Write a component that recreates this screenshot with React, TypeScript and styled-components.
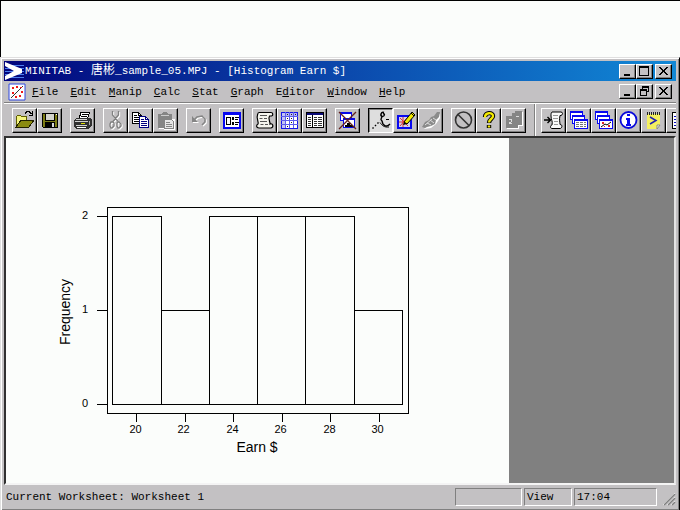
import React from "react";
import styled, { createGlobalStyle, css } from "styled-components";

const FACE = "#c3c1c3";
const LIGHT = "#fbfdfb";
const SHADOW = "#808080";

const GlobalStyle = createGlobalStyle`
  * { box-sizing: border-box; }
  body {
    margin: 0;
    background: ${LIGHT};
    font: 11px/16px "Liberation Mono", "Noto Sans CJK SC", monospace;
    color: #000;
  }
`;

const Page = styled.div`
  min-height: 100vh;
  display: flex;
  flex-direction: column;
`;

const TopStrip = styled.div`
  flex: 0 0 57px;
  background: ${LIGHT};
  border-top: 1px solid #000;
  border-left: 1px solid #000;
`;

const AppWindow = styled.main`
  flex: 1;
  min-width: 0;
  display: flex;
  flex-direction: column;
  padding: 3px;
  background: ${FACE};
  border: 1px solid;
  border-color: #dfdfdf #000 #000 #dfdfdf;
  box-shadow: inset 1px 1px 0 #fff, inset -1px -1px 0 ${SHADOW};
`;

const TitleBar = styled.header`
  display: flex;
  align-items: center;
  height: 20px;
  padding-right: 4px;
  background: linear-gradient(90deg, #02057c, #0b48ac 50%, #1188d6);
`;

const Title = styled.h1`
  flex: 1;
  margin: 0;
  padding-left: 1px;
  font: inherit;
  color: #fff;
  white-space: nowrap;
  overflow: hidden;
`;

const Hanzi = styled.span`
  font-size: 12px;
  line-height: 16px;
`;

const MenuBar = styled.nav`
  display: flex;
  align-items: center;
  height: 21px;
  padding: 0 4px;
`;

const MenuList = styled.div`
  flex: 1;
  display: flex;
  gap: 12px;
  padding-left: 6px;
  min-width: 0;
  overflow: hidden;
`;

const MenuItem = styled.button`
  border: 0;
  padding: 0;
  background: none;
  color: #000;
  font: inherit;
`;

const Controls = styled.div`
  display: flex;
  flex: none;
`;

const raised = css`
  border: 1px solid;
  border-color: #fff #000 #000 #fff;
  box-shadow: inset -1px -1px 0 ${SHADOW};
`;

const ControlButton = styled.button<{ $apart?: boolean }>`
  display: block;
  width: 17px;
  height: 15px;
  padding: 0;
  margin-left: ${(p) => (p.$apart ? "2px" : "0")};
  background: ${FACE};
  ${raised}
`;

const ToolRow = styled.div`
  display: flex;
  height: 34px;
  border-top: 1px solid ${SHADOW};
  box-shadow: inset 0 1px 0 #fff;
  overflow: hidden;
`;

const ToolBar = styled.div<{ $second?: boolean }>`
  display: flex;
  flex: none;
  gap: 8px;
  padding: 4px 8px;
  margin-top: 1px;
  ${(p) =>
    p.$second &&
    css`
      padding-left: 6px;
      border-left: 1px solid ${SHADOW};
      box-shadow: inset 1px 0 0 #fff;
    `}
`;

const ToolGroup = styled.div`
  display: flex;
`;

const ToolButton = styled.button<{ $pressed?: boolean }>`
  display: block;
  width: 25px;
  height: 25px;
  padding: 1px;
  background: ${FACE};
  ${raised}
  ${(p) =>
    p.$pressed &&
    css`
      background: #dedede;
      border-color: #000 #fff #fff #000;
      box-shadow: inset 1px 1px 0 ${SHADOW};
    `}
`;

const Icon = styled.svg`
  display: block;
  width: 21px;
  height: 21px;
`;

const Workspace = styled.section`
  flex: 1;
  display: grid;
  grid-template-columns: 61fr 20fr;
  background: ${SHADOW};
  border: 2px solid;
  border-color: #303030 #e4e4e4 #f4f4f4 #303030;
`;

const GraphSheet = styled.div`
  background: ${LIGHT};
  min-width: 0;
`;

const Chart = styled.svg`
  display: block;
  width: 503px;
  max-width: 100%;
  height: auto;
  font-family: "Liberation Sans", sans-serif;
`;

const StatusBar = styled.footer`
  display: flex;
  align-items: center;
  gap: 2px;
  height: 21px;
  margin-top: 1px;
`;

const StatusText = styled.div`
  flex: 1;
  padding-left: 2px;
  white-space: nowrap;
`;

const Pane = styled.div<{ $width: number }>`
  width: ${(p) => p.$width}px;
  height: 18px;
  padding-left: 2px;
  border: 1px solid;
  border-color: ${SHADOW} #fff #fff ${SHADOW};
`;

const Grip = styled.svg`
  width: 17px;
  height: 18px;
`;

type Tool = {
  label: string;
  pressed?: boolean;
  disabled?: boolean;
  art: React.ReactNode;
};

const crisp = { shapeRendering: "crispEdges" as const };

const OpenArt = (
  <g {...crisp}>
    <path d="M2 17V6h1V5h4v1h6v4h-6z" fill="#f4f480" />
    <path d="M2.500 16.500V6.500l1-1h3l1 1h5v3" fill="none" stroke="#606000" />
    <path d="M2 17l5-7h13l-5 7z" fill="#8a8a10" stroke="#202000" />
    <path d="M11.500 4V2.500h1v-1h3v1h1v1h1M18.500 1v4h-4" fill="none" stroke="#000" />
  </g>
);
const SaveArt = (
  <g {...crisp}>
    <path d="M3.500 3.500h15v14h-14l-1-1z" fill="#7c7c14" stroke="#000" />
    <path d="M6 4h10v6H6z" fill="#d4d4cc" />
    <path d="M6.500 4v6.500h9V4" fill="none" stroke="#000" />
    <path d="M6 12h10v6H6z" fill="#000" />
    <path d="M13 13h2v4h-2z" fill="#d8d8d8" />
    <path d="M17 4h1v1h-1z" fill="#fff" />
  </g>
);
const PrintArt = (
  <g {...crisp}>
    <path d="M7 9l2-7h9l-3 7z" fill="#fff" stroke="#000" />
    <path d="M9.500 4.500h6M9 6.500h6" stroke="#000" />
    <path d="M2 10l3-2h13l2 2v5l-3 4H4l-2-2z" fill="#303030" />
    <path d="M4 9.500h11M3 11.500h13M4 15.500h11" stroke="#d0d0d0" />
    <path d="M5 17.500h9" stroke="#fff" />
    <path d="M9 13h4v1H9z" fill="#dede00" />
    <path d="M17 11l1-1v4l-1 1z" fill="#aaa" />
  </g>
);
const CutShape = (
  <path
    d="M7.500 1v4l6 7M13.500 1v4l-6 7M6 12h2l1 1v3l-2 2H6l-1-2v-2zM14 12h-1l-1 1v3l1 2h1l2-2v-2z"
    fill="none"
    strokeWidth="1.300"
  />
);
const CutArt = (
  <g>
    <g stroke="#fff" transform="translate(1 1)">{CutShape}</g>
    <g stroke="#808080">{CutShape}</g>
  </g>
);
const CopyArt = (
  <g {...crisp}>
    <path d="M2.500 2.500h6l3 3v8h-9z" fill="#fff" stroke="#000" />
    <path d="M8.500 2.500v3h3M4 5.500h3M4 7.500h5M4 9.500h5M4 11.500h5" fill="none" stroke="#000" />
    <path d="M9.500 6.500h6l3 3v8h-9z" fill="#fff" stroke="#000080" />
    <path d="M15.500 6.500v3h3M11 9.500h3M11 11.500h6M11 13.500h6M11 15.500h6" fill="none" stroke="#000080" />
  </g>
);
const PasteArt = (
  <g {...crisp}>
    <path d="M4 5h13v4h3v11H9v-1H4z" fill="#fff" />
    <path d="M3 4h4l1-2h4l1 2h4v14H3z" fill="#858585" />
    <path d="M6 5.500h8" stroke="#ccc" />
    <path d="M9.500 9.500h7l2 2v7h-9z" fill="#e6e6e6" stroke="#858585" />
    <path d="M11 12.500h4M11 14.500h6M11 16.500h6" stroke="#858585" />
  </g>
);
const UndoShape = (
  <g>
    <path d="M5 11l4-4 5-1 3 3v3l-3 3" fill="none" strokeWidth="1.600" />
    <path d="M4 6v6h6z" stroke="none" />
  </g>
);
const UndoArt = (
  <g>
    <g stroke="#fff" fill="#fff" transform="translate(1 1)">{UndoShape}</g>
    <g stroke="#858585" fill="#858585">{UndoShape}</g>
  </g>
);
const DialogArt = (
  <g {...crisp}>
    <path d="M3 3h16v15H3z" fill="#fff" stroke="#0808f0" strokeWidth="2" />
    <path d="M2 2h18v3H2z" fill="#0808f0" />
    <path d="M5.500 7.500h4v7h-4z" fill="#fff" stroke="#000" />
    <path d="M11.500 7.500h1v2h-1zM11.500 12.500h1v2h-1z" fill="none" stroke="#000" />
    <path d="M14 7.500h4M14 9.500h3M14 12.500h4M14 14.500h3" stroke="#000" />
  </g>
);
const ScrollArt = (
  <g>
    <path
      d="M5 2.500h12c2 0 2.500 3 .5 3.500h-2c-2 3 1 6 .5 8 3-1 4 3 1 4H5c-3 0-3-3-1-4 1-2-2-6-.5-9 .2-1.500.5-2.500 1.500-2.500z"
      fill="#f4f4ee"
      stroke="#000"
      strokeWidth="1.200"
    />
    <path d="M6 5.500h7M5.500 8.500h3M10 8.500h3M6 11.500h7M6.500 14.500h3M11 14.500h3" stroke="#555" />
  </g>
);
const WorksheetArt = (
  <g {...crisp}>
    <path d="M2.500 2.500h16v16h-16z" fill="#fff" stroke="#1414e8" />
    <path d="M3 3h15v3H3z" fill="#b4b4f4" />
    <path d="M3 3h3v15H3z" fill="#c4c4f4" />
    <path d="M6.500 2v16M10.500 2v16M14.500 2v16M2 6.500h17M2 10.500h17M2 14.500h17" stroke="#5c5cec" />
    <path d="M8 4.500h1M12 4.500h1M16 4.500h1M8 8.500h1M12 8.500h1M12 12.500h1M8 16.500h1" stroke="#222" />
  </g>
);
const ManagerArt = (
  <g {...crisp}>
    <path d="M2.500 2.500h17v15h-17z" fill="#fff" stroke="#000" />
    <path d="M3 3h16v2H3z" fill="#0c0c78" />
    <path d="M8.500 5v12" stroke="#000" />
    <path d="M4 7.500h3M4 9.500h3M4 11.500h3M4 13.500h3M4 15.500h3M10 7.500h3M14 7.500h4M10 9.500h3M14 9.500h4M10 11.500h3M14 11.500h4M10 13.500h3M14 13.500h4M10 15.500h3M14 15.500h4" stroke="#333" />
  </g>
);
const CloseGraphsArt = (
  <g>
    <g {...crisp} fill="#fff" stroke="#0808e8">
      <path d="M3.500 2.500h11v8h-11z" />
      <path d="M3 3h12" strokeWidth="2" />
      <path d="M6.500 8.500h11v9h-11z" />
      <path d="M6 9h12" strokeWidth="2" />
    </g>
    <path d="M8 17v-2h2v-2h3v2h3v2z" fill="#000" {...crisp} />
    <path d="M2 2l17 17M19 2L2 19" stroke="#64201c" strokeWidth="1.300" />
  </g>
);
const BrushArt = (
  <g fill="none" stroke="#000">
    <path
      d="M14 2.500c-3-1-4 3-2 4 3 0 3-3 1-3M12 7c-1 2-2 2 0 4 1 2 0 3 2 4 2 2 4 1 6-1"
      strokeWidth="1.500"
    />
    <path d="M10 12.500c2 3 4 5 9 4.500" />
    <path d="M2.500 18.500L10 11" strokeDasharray="1.500 2" strokeWidth="1.400" />
    <path d="M16 9.500h3" />
  </g>
);
const EditGraphArt = (
  <g>
    <path d="M3 6h13v12H3z" fill="#d0d0ee" stroke="#0808f0" strokeWidth="2" />
    <path d="M5 8l8 8M12 8l-7 8M4 12h10M8 7v10" stroke="#e03030" />
    <path d="M9 12l8-10 3 3-8 9z" fill="#f0e800" stroke="#000" />
    <path d="M8 15l1-3 3 2z" fill="#000" />
    <path d="M16 3l3 3" stroke="#000" />
  </g>
);
const PaintArt = (
  <g>
    <path d="M4 19l8-8 6-7h2v4l-4 6-5 4z" fill="#fff" />
    <path d="M2 17l3-5 4-2 2-3 3-1 3-4h3l-1 5-3 3-1 4-4 2-4 1-2 1z" fill="#8b8b8b" />
    <path d="M5 15l7-6M7 13l4 2M10 10l4 3M13 8l3 2" stroke="#ddd" />
  </g>
);
const CancelArt = (
  <g fill="none" stroke="#333">
    <circle cx="10.500" cy="10" r="8" strokeWidth="1.600" />
    <path d="M5 4.500l11 11" strokeWidth="1.600" />
  </g>
);
const HelpArt = (
  <g fill="none">
    <path d="M7 7c0-5 8-5 8-1 0 3-4 3-4 7M11 15v3" stroke="#000" strokeWidth="4.400" />
    <path d="M7 7.500c0-5.500 8-5.500 8-1.500 0 3-4 3-4 6.500M11 15.500v2" stroke="#f4ea00" strokeWidth="2.400" />
  </g>
);
const SessionOffArt = (
  <g {...crisp}>
    <path d="M4 7h6V4h8V2h2v14h-4v3H4z" fill="#fff" />
    <path d="M3 6h6V3h3V1h7v14h-4v3H3z" fill="#858585" />
    <path d="M6 9h3v1H6zM8 10h1v2H8zM6 12h2v1H6zM6 13h3v1H6zM13 6h3v1h-3z" fill="#ddd" />
  </g>
);
const InsertScrollArt = (
  <g>
    <path d="M1 10h6M4.500 7l3 3-3 3" stroke="#000" fill="none" strokeWidth="1.400" />
    <path d="M9 2h9c2 0 2 3 0 3.500h-1c-1 4 0 7 0 9 3 0 2 4 0 4H9c-2 0-2-3 0-3.500 1-4-1-5-1-9 0-2 0-3 1-4z" fill="#fafafa" stroke="#000" />
    <path d="M10 5.500h5M10 8.500h5M11 11.500h4M11 14.500h4" stroke="#999" />
  </g>
);
const stacked = (
  <g {...crisp} fill="#fff" stroke="#0808f0">
    <path d="M2.500 1.500h12v8h-12z" />
    <path d="M2 2h13" strokeWidth="2" />
    <path d="M4.500 5.500h12v8h-12z" />
    <path d="M4 6h13" strokeWidth="2" />
    <path d="M6.500 9.500h13v9h-13z" />
    <path d="M6 10h14" strokeWidth="2" />
  </g>
);
const SheetsArt = (
  <g>
    {stacked}
    <path d="M8 12.500h3M12 12.500h3M16 12.500h2M8 14.500h3M12 14.500h3M16 14.500h2M8 16.500h3M12 16.500h3M16 16.500h2" stroke="#777" {...crisp} />
  </g>
);
const GraphsArt = (
  <g>
    {stacked}
    <path d="M8 17l4-3 2 1 4-3" fill="none" stroke="#000" />
    <path d="M9 12h2v2H9zM15 15h2v2h-2zM11 16h1v1h-1z" fill="#e02020" />
  </g>
);
const InfoArt = (
  <g>
    <circle cx="10.500" cy="10" r="8" fill="#fff" stroke="#0808d8" strokeWidth="1.800" />
    <path d="M9 4h3v2H9zM8 8h4v6h1v2H8v-2h1v-4H8z" fill="#0808f0" {...crisp} />
  </g>
);
const NoteArt = (
  <g>
    <path d="M4 4h13v11l-3 4H4z" fill="#f4f060" />
    <path d="M17 15l-3 4v-4z" fill="#fff" stroke="#888" />
    <path d="M4 3.500h13" stroke="#222" strokeDasharray="1 1" strokeWidth="3" />
    <path d="M7 7l6 3.500L7 14" fill="none" stroke="#2020b0" strokeWidth="1.500" />
  </g>
);
const ReportArt = (
  <g {...crisp}>
    <path d="M4.500 2.500h12v16h-12z" fill="#fff" stroke="#000" />
    <path d="M6 6.500h9M6 9.500h9M6 12.500h9M6 15.500h9" stroke="#0808c0" />
  </g>
);

const mainTools: Tool[][] = [
  [
    { label: "Open", art: OpenArt },
    { label: "Save", art: SaveArt },
  ],
  [{ label: "Print", art: PrintArt }],
  [
    { label: "Cut", art: CutArt, disabled: true },
    { label: "Copy", art: CopyArt },
    { label: "Paste", art: PasteArt, disabled: true },
  ],
  [{ label: "Undo", art: UndoArt, disabled: true }],
  [{ label: "Last dialog", art: DialogArt }],
  [
    { label: "Session window", art: ScrollArt },
    { label: "Data window", art: WorksheetArt },
    { label: "Project manager", art: ManagerArt },
  ],
  [{ label: "Close graphs", art: CloseGraphsArt }],
  [
    { label: "View mode", art: BrushArt, pressed: true },
    { label: "Edit mode", art: EditGraphArt },
    { label: "Brush mode", art: PaintArt, disabled: true },
  ],
  [
    { label: "Cancel", art: CancelArt },
    { label: "Help", art: HelpArt },
    { label: "StatGuide", art: SessionOffArt, disabled: true },
  ],
];

const managerTools: Tool[] = [
  { label: "Show session", art: InsertScrollArt },
  { label: "Show worksheets", art: SheetsArt },
  { label: "Show graphs", art: GraphsArt },
  { label: "Show info", art: InfoArt },
  { label: "Show history", art: NoteArt },
  { label: "Show report", art: ReportArt },
];

const menus: [string, string, string][] = [
  ["", "F", "ile"],
  ["", "E", "dit"],
  ["", "M", "anip"],
  ["", "C", "alc"],
  ["", "S", "tat"],
  ["", "G", "raph"],
  ["E", "d", "itor"],
  ["", "W", "indow"],
  ["", "H", "elp"],
];

function Tools({ items }: { items: Tool[] }) {
  return (
    <ToolGroup>
      {items.map((t) => (
        <ToolButton
          key={t.label}
          type="button"
          aria-label={t.label}
          aria-pressed={t.pressed}
          disabled={t.disabled}
          $pressed={t.pressed}
        >
          <Icon viewBox="0 0 21 21" aria-hidden="true">
            {t.art}
          </Icon>
        </ToolButton>
      ))}
    </ToolGroup>
  );
}

const ControlArt = styled.svg`
  display: block;
  width: 15px;
  height: 13px;
  shape-rendering: crispEdges;
`;

function WindowControls({ name, restore }: { name: string; restore?: boolean }) {
  return (
    <Controls>
      <ControlButton type="button" aria-label={`Minimize ${name}`}>
        <ControlArt viewBox="0 0 15 13">
          <path d="M4 9h6v2H4z" />
        </ControlArt>
      </ControlButton>
      <ControlButton type="button" aria-label={`${restore ? "Restore" : "Maximize"} ${name}`}>
        <ControlArt viewBox="0 0 15 13">
          {restore ? (
            <path d="M5 1h7v6h-2v4H3V4h2zM6 3v1h4v2h1V3zM4 6v4h5V6z" fillRule="evenodd" />
          ) : (
            <path d="M2 1h10v10H2zM3 3v7h8V3z" fillRule="evenodd" />
          )}
        </ControlArt>
      </ControlButton>
      <ControlButton type="button" aria-label={`Close ${name}`} $apart>
        <ControlArt viewBox="0 0 15 13">
          <path d="M3 2h2v1h1v1h1v1h1V4h1V3h1V2h2v1h-1v1h-1v1H9v2h1v1h1v1h1v1h-2V9H9V8H8V7H7v1H6v1H5v1H3V9h1V8h1V7h1V5H5V4H4V3H3z" />
        </ControlArt>
      </ControlButton>
    </Controls>
  );
}

const AppLogo = styled.svg`
  flex: none;
  width: 19px;
  height: 18px;
  margin-left: 1px;
`;

const DocLogo = styled.svg`
  flex: none;
  width: 18px;
  height: 18px;
`;

/* Histogram geometry, in the units of the chart's view box. */
const BASE = 266.5;
const UNIT = 94;
const edges = [106.5, 155.5, 203.5, 251.5, 299.5, 348.5, 396.5];
const counts = [2, 1, 2, 2, 2, 1];
const xTicks = [20, 22, 24, 26, 28, 30];
const yTicks = [0, 1, 2];

function Histogram() {
  return (
    <Chart viewBox="0 0 503 345" role="img" aria-label="Histogram of Earn $">
      <g fill="none" stroke="#000" shapeRendering="crispEdges">
        <rect x="101.500" y="69.500" width="301" height="206" />
        {counts.map((n, i) => (
          <rect
            key={i}
            x={edges[i]}
            y={BASE - n * UNIT}
            width={edges[i + 1] - edges[i]}
            height={n * UNIT}
          />
        ))}
        {yTicks.map((v) => (
          <path key={v} d={`M91 ${BASE - v * UNIT}h10`} />
        ))}
        {xTicks.map((v, i) => (
          <path key={v} d={`M${130.5 + Math.round(i * 48.6)} 276v8`} />
        ))}
      </g>
      <g fontSize="11" textAnchor="middle">
        {yTicks.map((v) => (
          <text key={v} x="79" y={Math.round(BASE - v * UNIT) + 2}>
            {v}
          </text>
        ))}
        {xTicks.map((v, i) => (
          <text key={v} x={129.5 + Math.round(i * 48.4)} y="295">
            {v}
          </text>
        ))}
      </g>
      <g fontSize="14" textAnchor="middle">
        <text x="251" y="314">
          Earn $
        </text>
        <text transform="translate(64 174) rotate(-90)">Frequency</text>
      </g>
    </Chart>
  );
}

export default function App() {
  return (
    <Page>
      <GlobalStyle />
      <TopStrip />
      <AppWindow>
        <TitleBar>
          <AppLogo viewBox="0 0 19 18" aria-hidden="true">
            <path d="M0 3.500h19M0 6.500h19M0 9.500h19M0 12.500h19M0 15.500h19" stroke="#4d7ef0" />
            <path d="M0 0l17 7v4L0 18v-4l9-5L0 4z" fill="#fff" />
          </AppLogo>
          <Title>
            MINITAB - <Hanzi>唐彬</Hanzi>_sample_05.MPJ - [Histogram Earn $]
          </Title>
          <WindowControls name="application" />
        </TitleBar>
        <MenuBar>
          <DocLogo viewBox="0 0 18 18" aria-hidden="true">
            <path d="M1 1h16v16H1z" fill="#fff" stroke="#3048e0" />
            <path d="M3 15L15 3" stroke="#333" />
            <path d="M4 4h2v2H4zM8 3h2v2H8zM13 8h2v2h-2zM11 12h2v2h-2zM4 9h2v2H4zM7 13h2v2H7zM12 4h2v1h-2z" fill="#f01818" />
          </DocLogo>
          <MenuList>
            {menus.map(([before, key, after]) => (
              <MenuItem key={before + key + after} type="button">
                {before}
                <u>{key}</u>
                {after}
              </MenuItem>
            ))}
          </MenuList>
          <WindowControls name="graph" restore />
        </MenuBar>
        <ToolRow>
          <ToolBar role="toolbar" aria-label="Standard">
            {mainTools.map((group) => (
              <Tools key={group[0].label} items={group} />
            ))}
          </ToolBar>
          <ToolBar role="toolbar" aria-label="Project manager" $second>
            <Tools items={managerTools} />
          </ToolBar>
        </ToolRow>
        <Workspace>
          <GraphSheet>
            <Histogram />
          </GraphSheet>
        </Workspace>
        <StatusBar>
          <StatusText>Current Worksheet: Worksheet 1</StatusText>
          <Pane $width={67} />
          <Pane $width={48}>View</Pane>
          <Pane $width={83}>17:04</Pane>
          <Grip viewBox="0 0 17 18" aria-hidden="true">
            <path d="M4 17L16 5M8 17l8-8M12 17l4-4" stroke="#fff" />
            <path d="M5 17L16 6M9 17l7-7M13 17l3-3" stroke="#808080" strokeWidth="1.500" />
          </Grip>
        </StatusBar>
      </AppWindow>
    </Page>
  );
}
